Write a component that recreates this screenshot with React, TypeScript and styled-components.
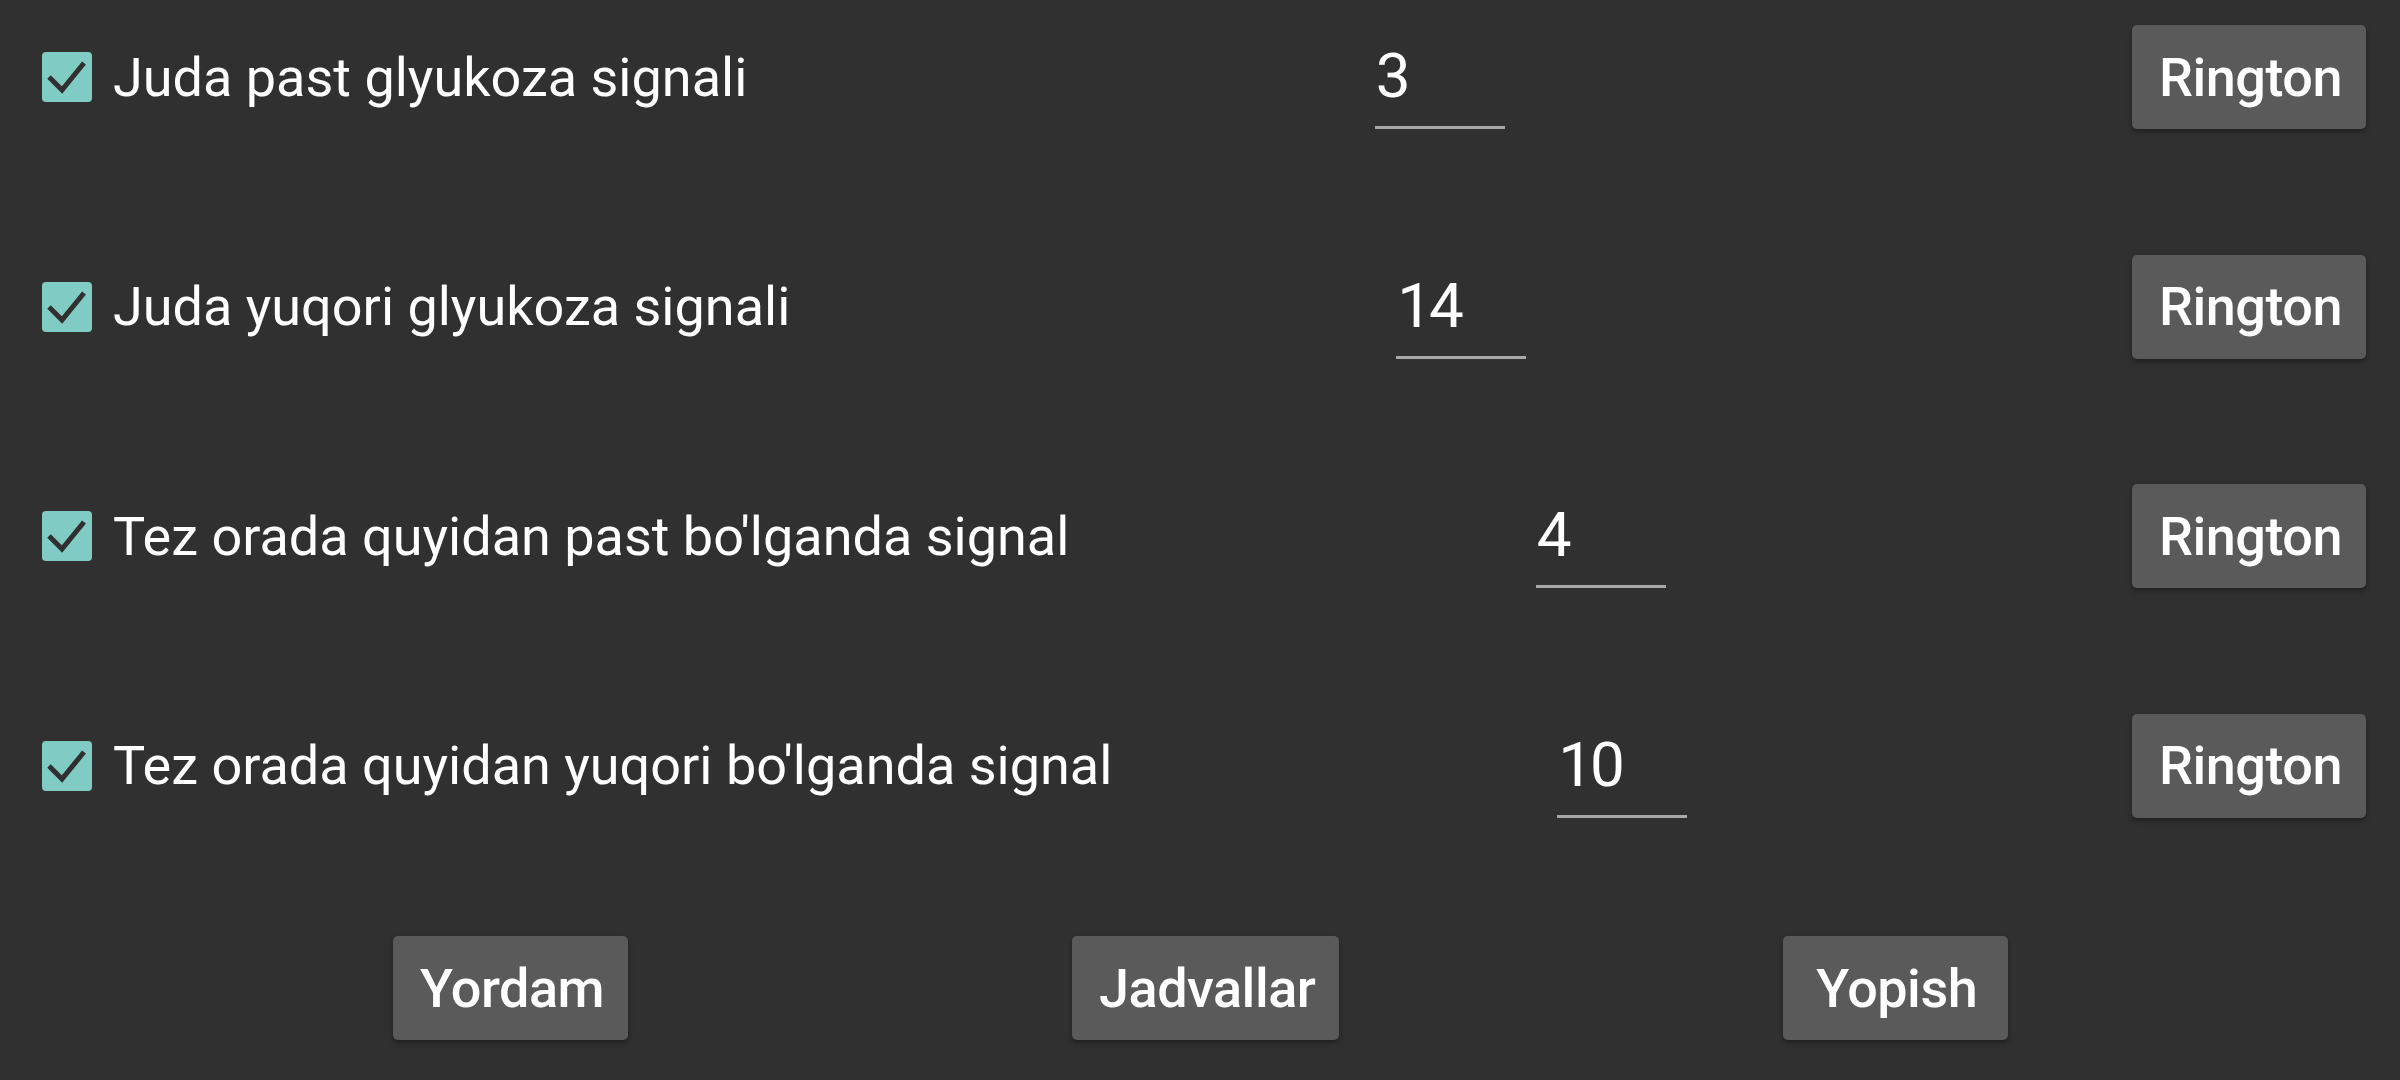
import React from "react";
import styled, { createGlobalStyle } from "styled-components";

const alarms = [
  { label: "Juda past glyukoza signali", value: "3" },
  { label: "Juda yuqori glyukoza signali", value: "14" },
  { label: "Tez orada quyidan past bo'lganda signal", value: "4" },
  { label: "Tez orada quyidan yuqori bo'lganda signal", value: "10" },
];

const CheckBox = () => (
  <Box>
    <svg width="50" height="50" viewBox="0 0 50 50">
      <rect width="50" height="50" rx="4" fill="#80cbc4" />
      <path d="M7 25 L20 38 L42 11" fill="none" stroke="#303030" strokeWidth="5" />
    </svg>
  </Box>
);

const App = () => {
  return (
    <>
      <GlobalStyle />
      <Screen>
        {alarms.map((a) => (
          <AlarmRow key={a.label}>
            <CheckBox />
            <Label>{a.label}</Label>
            <ValueSlot>
              <ValueField>{a.value}</ValueField>
            </ValueSlot>
            <Button>Rington</Button>
          </AlarmRow>
        ))}
        <Footer>
          <Button>Yordam</Button>
          <Button>Jadvallar</Button>
          <Button $wide>Yopish</Button>
        </Footer>
      </Screen>
    </>
  );
};

export default App;

// Styles

const GlobalStyle = createGlobalStyle`
  html, body {
    margin: 0;
    background: #303030;
  }
  body {
    font-family: Roboto, "Noto Sans", sans-serif;
    color: #ffffff;
  }
`;

const Screen = styled.div`
  width: 2400px;
  height: 1080px;
  display: flex;
  flex-direction: column;
  padding-top: 25px;
  box-sizing: border-box;
  overflow: hidden;
`;

const AlarmRow = styled.div`
  height: 104px;
  display: flex;
  align-items: center;
  padding: 0 34px 0 42px;
  margin-bottom: 125.5px;
  &:nth-of-type(4) {
    margin-bottom: 118.5px;
  }
`;

const Box = styled.div`
  width: 50px;
  height: 50px;
  flex-shrink: 0;
  svg {
    display: block;
  }
`;

const Label = styled.div`
  margin-left: 21px;
  font-size: 54px;
  white-space: nowrap;
`;

const ValueSlot = styled.div`
  flex: 1;
  display: flex;
  justify-content: center;
`;

const ValueField = styled.div`
  width: 130px;
  margin-top: 20px;
  padding: 0 0 19px 1px;
  box-sizing: border-box;
  font-size: 62px;
  line-height: 62px;
  letter-spacing: -3px;
  border-bottom: 3px solid #a8a8a8;
`;

const Button = styled.div<{ $wide?: boolean }>`
  height: 104px;
  padding: 0 ${(p) => (p.$wide ? "31px" : "24px")} 0 ${(p) => (p.$wide ? "33px" : "27px")};
  display: flex;
  align-items: center;
  background: #5a5a5b;
  border-radius: 5px;
  box-shadow: 0 3px 5px rgba(0, 0, 0, 0.35);
  font-size: 54px;
  font-weight: 500;
  letter-spacing: -0.5px;
  white-space: nowrap;
`;

const Footer = styled.div`
  display: flex;
  padding-left: 393px;
  gap: 444px;
`;
